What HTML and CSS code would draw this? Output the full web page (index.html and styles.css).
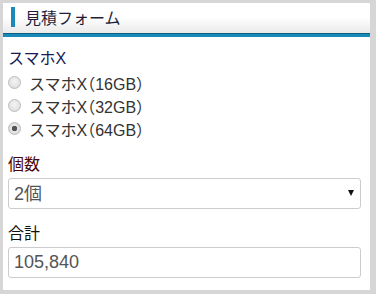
FILE: index.html
```html
<!DOCTYPE html>
<html lang="ja">
  <head>
    <meta charset="UTF-8" />
    <meta name="viewport" content="width=device-width, initial-scale=1.0" />
    <title>見積フォーム</title>
    <link rel="stylesheet" href="styles.css">
  </head>
  <body>
    <div class="panel">
      <h2 class="panel-title">見積フォーム</h2>

      <div class="panel-body">
        <!-- 機種 -->
        <div class="field">
          <p class="label label-model">スマホX</p>
          <label class="radio"><input type="radio" name="model" />スマホX（16GB）</label>
          <label class="radio"><input type="radio" name="model" />スマホX（32GB）</label>
          <label class="radio"><input type="radio" name="model" checked />スマホX（64GB）</label>
        </div>

        <!-- 個数 -->
        <div class="field">
          <p class="label label-count">個数</p>
          <div class="select-wrap">
            <select class="control">
              <option>1個</option>
              <option selected>2個</option>
              <option>3個</option>
            </select>
          </div>
        </div>

        <!-- 合計 -->
        <div class="field">
          <p class="label">合計</p>
          <input type="text" class="control" value="105,840" />
        </div>
      </div>
    </div>
  </body>
</html>
```

FILE: styles.css
```css
html,
body {
  height: 100%;
}
body {
  font-family: "Liberation Sans", Arial, "Noto Sans CJK JP", sans-serif;
  margin: 0;
  background-color: #d6d6d6;
  padding: 3px 6px 4px 3px;
  box-sizing: border-box;
}
.panel {
  background-color: #fff;
  height: 100%;
}
.panel-title {
  margin: 0;
  height: 31px;
  padding: 0 0 0 22px;
  position: relative;
  font-size: 16px;
  font-weight: normal;
  line-height: 31px;
  color: #1e1e3a;
  background: linear-gradient(#fff 0%, #fff 45%, #e9e9e9 100%);
  border-bottom: 3px solid #1a8ab8;
  box-shadow: inset 0 -1px 0 #0e5f80;
}
.panel-title::before {
  content: '';
  position: absolute;
  left: 8px;
  top: 4px;
  width: 4px;
  height: 20px;
  background-color: #1a8ab8;
}
.panel-body {
  padding: 12px 9px 0 5px;
}
.field {
  margin-bottom: 15px;
}
.label {
  margin: 0 0 3px;
  font-size: 16px;
  line-height: 20px;
  color: #111;
}
.label-model {
  margin-bottom: 2px;
  color: #1a1a55;
}
.label-count {
  color: #4a0808;
}
.radio {
  display: flex;
  align-items: center;
  gap: 8px;
  height: 23px;
  font-size: 16px;
  color: #333;
  font-feature-settings: "halt";
}
.radio input {
  appearance: none;
  box-sizing: border-box;
  margin: 0;
  width: 13px;
  height: 13px;
  border: 1px solid #bbb;
  border-radius: 50%;
  background: radial-gradient(circle at 50% 40%, #f4f4f4, #d8d8d8);
}
.radio input:checked {
  background: radial-gradient(circle, #555 0, #555 2.5px, #e6e6e6 3px, #d4d4d4);
}
.select-wrap {
  position: relative;
}
.select-wrap::after {
  content: '';
  position: absolute;
  right: 7px;
  top: 12px;
  border-left: 3.5px solid transparent;
  border-right: 3.5px solid transparent;
  border-top: 6px solid #111;
}
.control {
  display: block;
  width: 100%;
  height: 31px;
  box-sizing: border-box;
  padding: 0 5px;
  border: 1px solid #ccc;
  border-radius: 3px;
  background: #fff;
  font-family: inherit;
  font-size: 18px;
  color: #555;
  outline: none;
  appearance: none;
}
```
